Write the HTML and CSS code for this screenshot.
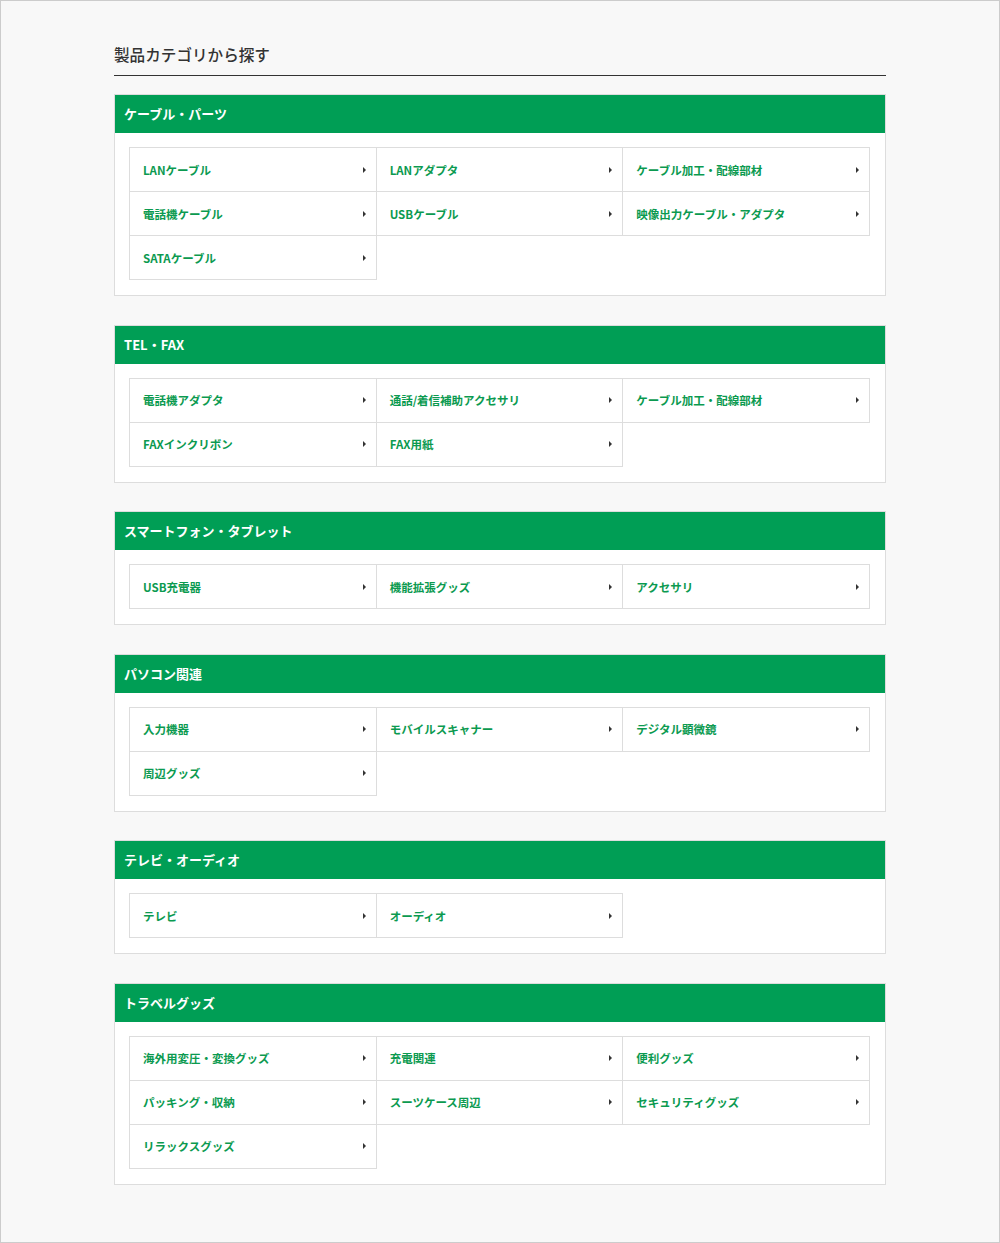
FILE: index.html
```html
<!DOCTYPE html>
<html lang="ja">
<head>
  <meta charset="UTF-8">
  <meta name="viewport" content="width=device-width, initial-scale=1.0">
  <title>製品カテゴリから探す</title>
  <link rel="stylesheet" href="styles.css">
</head>
<body>
  <div class="page">
    <div class="inner">
      <h1 class="page-title">製品カテゴリから探す</h1>

      <section class="cat">
        <h2 class="cat-head">ケーブル・パーツ</h2>
        <ul class="cat-list">
          <li><a href="#">LANケーブル</a></li>
          <li><a href="#">LANアダプタ</a></li>
          <li><a href="#">ケーブル加工・配線部材</a></li>
          <li><a href="#">電話機ケーブル</a></li>
          <li><a href="#">USBケーブル</a></li>
          <li><a href="#">映像出力ケーブル・アダプタ</a></li>
          <li><a href="#">SATAケーブル</a></li>
        </ul>
      </section>

      <section class="cat">
        <h2 class="cat-head">TEL・FAX</h2>
        <ul class="cat-list">
          <li><a href="#">電話機アダプタ</a></li>
          <li><a href="#">通話/着信補助アクセサリ</a></li>
          <li><a href="#">ケーブル加工・配線部材</a></li>
          <li><a href="#">FAXインクリボン</a></li>
          <li><a href="#">FAX用紙</a></li>
        </ul>
      </section>

      <section class="cat">
        <h2 class="cat-head">スマートフォン・タブレット</h2>
        <ul class="cat-list">
          <li><a href="#">USB充電器</a></li>
          <li><a href="#">機能拡張グッズ</a></li>
          <li><a href="#">アクセサリ</a></li>
        </ul>
      </section>

      <section class="cat">
        <h2 class="cat-head">パソコン関連</h2>
        <ul class="cat-list">
          <li><a href="#">入力機器</a></li>
          <li><a href="#">モバイルスキャナー</a></li>
          <li><a href="#">デジタル顕微鏡</a></li>
          <li><a href="#">周辺グッズ</a></li>
        </ul>
      </section>

      <section class="cat">
        <h2 class="cat-head">テレビ・オーディオ</h2>
        <ul class="cat-list">
          <li><a href="#">テレビ</a></li>
          <li><a href="#">オーディオ</a></li>
        </ul>
      </section>

      <section class="cat">
        <h2 class="cat-head">トラベルグッズ</h2>
        <ul class="cat-list">
          <li><a href="#">海外用変圧・変換グッズ</a></li>
          <li><a href="#">充電関連</a></li>
          <li><a href="#">便利グッズ</a></li>
          <li><a href="#">パッキング・収納</a></li>
          <li><a href="#">スーツケース周辺</a></li>
          <li><a href="#">セキュリティグッズ</a></li>
          <li><a href="#">リラックスグッズ</a></li>
        </ul>
      </section>
    </div>
  </div>
</body>
</html>
```

FILE: styles.css
```css
* {
  box-sizing: border-box;
}
body {
  margin: 0;
  font-family: "Noto Sans CJK JP", "Noto Sans", sans-serif;
  color: #333;
  background: #f8f8f8;
}
.page {
  height: 1243px;
  border: 1px solid #ccc;
  background: #f8f8f8;
  padding-top: 41px;
}
.inner {
  width: 772px;
  margin-left: 113px;
}
.page-title {
  margin: 0 0 18px;
  padding-bottom: 9px;
  border-bottom: 1px solid #333;
  font-size: 15.6px;
  line-height: 24px;
  font-weight: 500;
  color: #333;
}
.cat {
  background: #fff;
  border: 1px solid #ddd;
  margin-bottom: 28.5px;
}
.cat-head {
  margin: 0;
  height: 38px;
  padding: 0 9px;
  background: #009e55;
  color: #fff;
  font-size: 13px;
  font-weight: bold;
  line-height: 38px;
}
.cat-list {
  list-style: none;
  margin: 0;
  padding: 14px 16px 16px 14px;
  display: grid;
  grid-template-columns: repeat(3, 1fr);
}
.cat-list li {
  border: 1px solid #ddd;
  margin: 0 -1px -1px 0;
}
.cat-list a {
  display: flex;
  align-items: center;
  justify-content: space-between;
  height: 43px;
  padding: 0 10px 0 13px;
  color: #0b9a50;
  font-size: 11.5px;
  font-weight: bold;
  text-decoration: none;
}
.cat-list a::after {
  content: "";
  border-left: 3px solid #333;
  border-top: 3px solid transparent;
  border-bottom: 3px solid transparent;
}
```
